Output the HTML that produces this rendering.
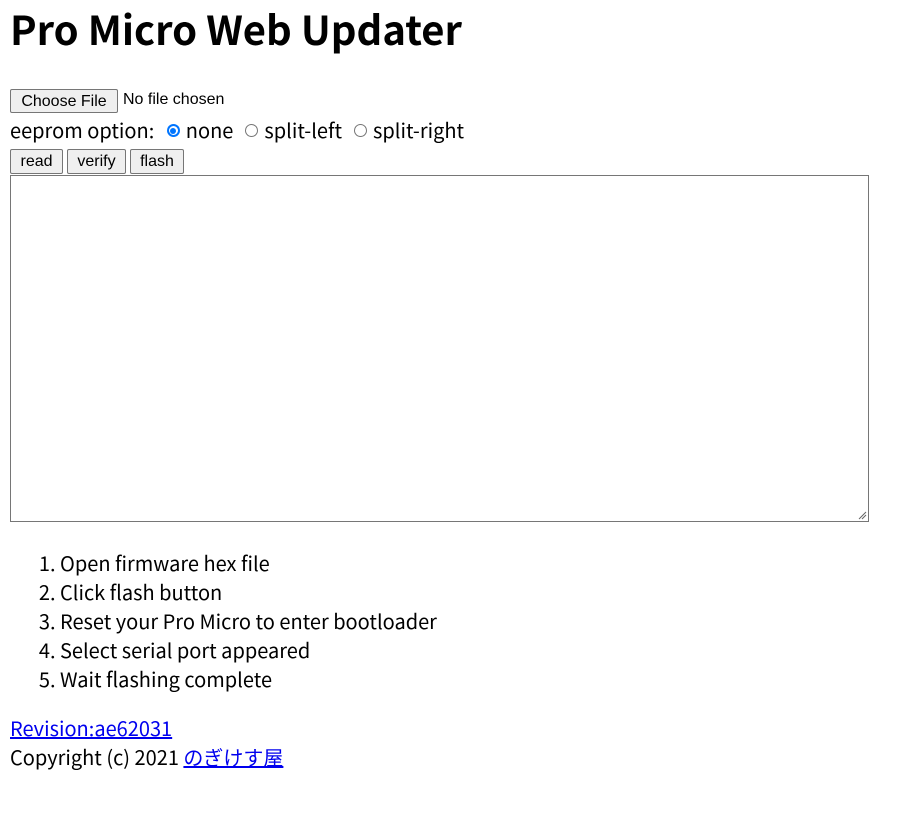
<!DOCTYPE html>
<html><head><meta charset="utf-8"><style>
body{margin:0;width:908px;height:817px;background:#fff;font-family:"Liberation Sans","Noto Sans CJK JP",sans-serif;color:#000;position:relative;overflow:hidden}
.cjk{font-family:"Noto Sans CJK JP","Liberation Sans",sans-serif;font-size:20px;line-height:29px}
.abs{position:absolute;left:10px;white-space:nowrap}
h1{margin:0;font-family:"Noto Sans CJK JP",sans-serif;font-weight:700;font-size:40px;line-height:60px}
.btn{display:inline-block;box-sizing:border-box;height:25px;border:1px solid #767676;border-radius:2px;background:#efefef;font:16px/23px "Liberation Sans",Arial,sans-serif;padding:0;text-align:center;vertical-align:top;position:absolute;top:0}
.radio{display:inline-block;width:13px;height:13px;border:1px solid #767676;border-radius:50%;box-sizing:border-box;vertical-align:middle;margin:0 6px 0 12px;position:relative;top:-2px}
.radio.on{border:2px solid #0075ff;margin-left:8px}
.radio.on::after{content:"";position:absolute;left:1.5px;top:1.5px;width:6px;height:6px;border-radius:50%;background:#0075ff}
a{color:#0000ee}
</style></head><body>
<h1 class="abs" style="top:-2px">Pro Micro Web Updater</h1>
<div class="abs" style="top:89px;width:400px;height:25px"><span class="btn" style="left:0;width:108px;height:24px">Choose File</span><span style="position:absolute;left:113px;font:16px/22px 'Liberation Sans',Arial,sans-serif">No file chosen</span></div>
<div class="abs cjk" style="top:115px">eeprom option: <span class="radio on"></span>none<span class="radio"></span>split-left<span class="radio"></span>split-right</div>
<div class="abs" style="top:149px;width:400px;height:25px"><span class="btn" style="left:0;width:53px">read</span><span class="btn" style="left:57px;width:59px">verify</span><span class="btn" style="left:120px;width:54px">flash</span></div>
<div style="position:absolute;left:10px;top:175px;width:859px;height:347px;box-sizing:border-box;border:1px solid #767676">
<svg style="position:absolute;right:1px;bottom:1px" width="9" height="9"><path d="M8 1L1 8M8 4L4 8" stroke="#666" stroke-width="1"/></svg></div>
<ol class="abs cjk" style="top:548px;margin:0;padding-left:60px;left:0">
<li>Open firmware hex file</li><li>Click flash button</li><li>Reset your Pro Micro to enter bootloader</li><li>Select serial port appeared</li><li>Wait flashing complete</li></ol>
<div class="abs cjk" style="top:713px"><a href="#">Revision:ae62031</a><br>Copyright (c) 2021 <a href="#">のぎけす屋</a></div>
</body></html>
